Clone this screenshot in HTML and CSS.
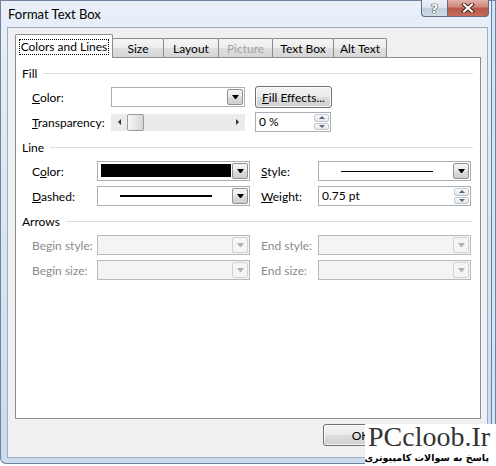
FILE: index.html
```html
<!DOCTYPE html>
<html lang="en">
<head>
  <meta charset="UTF-8" />
  <title>Format Text Box</title>
  <link rel="stylesheet" href="styles.css">
</head>
<body>

<div class="window">
  <div class="titlebar">
    <span class="title">Format Text Box</span>
    <div class="caption">
      <span class="cap-btn help">?</span>
      <span class="cap-btn close">
        <svg width="14" height="10" viewBox="0 0 14 10">
          <path d="M3 1.5 L11 8.5 M11 1.5 L3 8.5" stroke="#4a2620" stroke-width="4" stroke-linecap="square" fill="none"/>
          <path d="M3 1.5 L11 8.5 M11 1.5 L3 8.5" stroke="#fff" stroke-width="2" stroke-linecap="square" fill="none"/>
        </svg>
      </span>
    </div>
  </div>

  <div class="client">
    <div class="tabs">
      <div class="tab active"><span class="focus">Colors and Lines</span></div>
      <div class="tab w-size">Size</div>
      <div class="tab w-layout">Layout</div>
      <div class="tab w-picture off">Picture</div>
      <div class="tab w-textbox">Text Box</div>
      <div class="tab w-alt">Alt Text</div>
    </div>

    <div class="panel">
      <!-- Fill -->
      <div class="group">
        <div class="group-title">Fill</div>
        <div class="fields fields-fill">
          <span><u>C</u>olor:</span>
          <div class="combo">
            <div class="field"></div>
            <span class="drop"></span>
          </div>
          <button class="btn btn-effects"><u>F</u>ill Effects...</button>

          <span><u>T</u>ransparency:</span>
          <div class="scroll">
            <span class="sb-btn"><i class="arr-left"></i></span>
            <span class="thumb"></span>
            <span class="track"></span>
            <span class="sb-btn"><i class="arr-right"></i></span>
          </div>
          <div class="spin spin-pct">
            <span class="value">0 %</span>
            <span class="spin-btns"><i class="up"></i><i class="down"></i></span>
          </div>
        </div>
      </div>

      <!-- Line -->
      <div class="group">
        <div class="group-title">Line</div>
        <div class="fields fields-line">
          <span>C<u>o</u>lor:</span>
          <div class="combo">
            <div class="swatch"></div>
            <span class="drop"></span>
          </div>
          <span class="lbl2"><u>S</u>tyle:</span>
          <div class="combo">
            <div class="field"><span class="stroke thin"></span></div>
            <span class="drop"></span>
          </div>

          <span><u>D</u>ashed:</span>
          <div class="combo">
            <div class="field"><span class="stroke thick"></span></div>
            <span class="drop"></span>
          </div>
          <span class="lbl2"><u>W</u>eight:</span>
          <div class="spin">
            <span class="value">0.75 pt</span>
            <span class="spin-btns"><i class="up"></i><i class="down"></i></span>
          </div>
        </div>
      </div>

      <!-- Arrows -->
      <div class="group">
        <div class="group-title">Arrows</div>
        <div class="fields fields-line disabled">
          <span>Begin style:</span>
          <div class="combo"><div class="field"></div><span class="drop"></span></div>
          <span class="lbl2">End style:</span>
          <div class="combo"><div class="field"></div><span class="drop"></span></div>

          <span>Begin size:</span>
          <div class="combo"><div class="field"></div><span class="drop"></span></div>
          <span class="lbl2">End size:</span>
          <div class="combo"><div class="field"></div><span class="drop"></span></div>
        </div>
      </div>
    </div>

    <div class="actions">
      <button class="btn btn-dlg">OK</button>
      <button class="btn btn-dlg">Cancel</button>
    </div>
  </div>
</div>

<div class="watermark">
  <div class="wm-brand">PCcloob.Ir</div>
  <div class="wm-sub" dir="rtl">پاسخ به سوالات کامپیوتری</div>
</div>

</body>
</html>
```

FILE: styles.css
```css
body {
  margin: 0;
  background: #fff;
  font-family: Lato, "Liberation Sans", sans-serif;
  font-size: 12px;
  color: #000;
}

/* window frame */
.window {
  width: 496px;
  height: 464px;
  box-sizing: border-box;
  padding: 0 8px 6px 7px;
  display: flex;
  flex-direction: column;
  background: linear-gradient(180deg, #e8eff8 0%, #dbe6f2 45%, #cbdbed 100%);
  box-shadow: inset 0 0 0 1px #70859d, inset -4px 0 0 0 #d6e4f2, inset -5px 0 0 0 #4d86b8;
  border-radius: 0 0 6px 6px;
}

.titlebar {
  height: 27px;
  display: flex;
  justify-content: space-between;
}

.title {
  padding-left: 1px;
  line-height: 28px;
  font-size: 13px;
}

.caption {
  display: flex;
  margin-right: -1px;
  height: 17px;
}

.cap-btn {
  box-sizing: border-box;
  height: 17px;
  display: flex;
  align-items: center;
  justify-content: center;
  border: 1px solid #5d6f86;
  border-top: none;
}

.help {
  width: 26px;
  border-right: none;
  border-radius: 0 0 0 4px;
  background: linear-gradient(180deg, #eef2f7 0%, #dbe3ec 50%, #c3cfdc 51%, #cfdae6 100%);
  color: #fff;
  font-family: "DejaVu Sans", sans-serif;
  font-size: 13px;
  font-weight: bold;
  text-shadow: 0 0 1px #333, 0 0 1px #333, 0 0 1px #333;
}

.close {
  width: 42px;
  border-radius: 0 0 4px 0;
  background: linear-gradient(180deg, #e3b1a8 0%, #d08577 45%, #b8584a 50%, #c46a5b 100%);
}

/* client area */
.client {
  flex: 1;
  background: #f0f0f0;
  border: 1px solid #9cadc1;
  padding: 6px 6px 0 7px;
  display: flex;
  flex-direction: column;
}

.tabs {
  display: flex;
  align-items: flex-end;
  height: 23px;
}

.tab {
  box-sizing: border-box;
  height: 19px;
  margin-left: -1px;
  border: 1px solid #898c95;
  border-bottom: none;
  border-radius: 2px 2px 0 0;
  background: linear-gradient(180deg, #f5f5f5 0%, #ececec 50%, #e0e0e0 51%, #d6d6d6 100%);
  display: flex;
  align-items: center;
  justify-content: center;
  padding-top: 1px;
}

.tab.active {
  width: 98px;
  height: 24px;
  margin-left: 0;
  margin-bottom: -1px;
  background: #fff;
  position: relative;
  z-index: 1;
  align-items: flex-start;
  padding-top: 4px;
}

.focus {
  box-sizing: border-box;
  width: 90px;
  height: 16px;
  border: 1px dotted #000;
  text-align: center;
  line-height: 14px;
}

.w-size { width: 52px; }
.w-layout { width: 56px; }
.w-picture { width: 55px; }
.w-textbox { width: 62px; }
.w-alt { width: 54px; }

.tab.off {
  color: #a3a3a3;
}

.panel {
  height: 362px;
  box-sizing: border-box;
  border: 1px solid #898c95;
  background: #fff;
  padding-top: 8px;
}

.group + .group {
  margin-top: 8px;
}

.group-title {
  display: flex;
  align-items: center;
  height: 14px;
  padding-left: 6px;
  margin-right: 7px;
  margin-bottom: 7px;
}

.group-title::after {
  content: "";
  flex: 1;
  height: 1px;
  margin-left: 6px;
  background: #d5dfe5;
}

.fields {
  display: grid;
  grid-auto-rows: 20px;
  row-gap: 5px;
  align-items: center;
  padding-left: 16px;
}

.fields-fill {
  grid-template-columns: 79px 134px 87px;
}

.fields-line {
  grid-template-columns: 65px 153px 68px 153px;
}

.lbl2 {
  padding-left: 11px;
}

.disabled {
  color: #8b8b8b;
}

/* combo boxes */
.combo {
  box-sizing: border-box;
  height: 20px;
  padding: 1px;
  display: flex;
  border: 1px solid #a9afb7;
  background: #fff;
}

.combo .field {
  flex: 1;
  display: flex;
  align-items: center;
  justify-content: center;
}

.swatch {
  flex: 1;
  margin: 1px 1px 2px 2px;
  background: #000;
}

.stroke {
  width: 92px;
  background: #000;
}

.stroke.thin { height: 1px; }
.stroke.thick { height: 2px; }

.drop {
  box-sizing: border-box;
  width: 16px;
  border: 1px solid #8e9297;
  border-radius: 2px;
  background: linear-gradient(180deg, #f4f4f4 0%, #ebebeb 50%, #dcdcdc 51%, #cfcfcf 100%);
  display: flex;
  align-items: center;
  justify-content: center;
}

.drop::before {
  content: "";
  width: 1px;
  border-left: 3px solid transparent;
  border-right: 3px solid transparent;
  border-top: 4px solid #000;
}

.disabled .combo {
  border-color: #b7bbc0;
  background: #f4f4f4;
}

.disabled .drop {
  border-color: #d0d2d5;
  background: #f4f4f4;
}

.disabled .drop::before {
  border-top-color: #b1b1b1;
}

/* scroll bar */
.scroll {
  height: 17px;
  display: flex;
  background: #ebebeb;
}

.sb-btn {
  width: 16px;
  display: flex;
  align-items: center;
  justify-content: center;
}

.arr-left {
  border-top: 3px solid transparent;
  border-bottom: 3px solid transparent;
  border-right: 3px solid #333;
}

.arr-right {
  border-top: 3px solid transparent;
  border-bottom: 3px solid transparent;
  border-left: 3px solid #333;
}

.thumb {
  box-sizing: border-box;
  width: 17px;
  border: 1px solid #9a9a9a;
  border-radius: 2px;
  background: linear-gradient(90deg, #f6f6f6 0%, #e6e6e6 50%, #d6d6d6 100%);
}

.track {
  flex: 1;
}

/* spin boxes */
.spin {
  box-sizing: border-box;
  height: 20px;
  display: flex;
  align-items: stretch;
  border: 1px solid #a9afb7;
  background: #fff;
}

.spin-pct {
  width: 76px;
  margin-left: 10px;
}

.spin .value {
  flex: 1;
  padding-left: 3px;
  line-height: 18px;
}

.spin-btns {
  width: 15px;
  display: flex;
  flex-direction: column;
  padding: 1px 1px 1px 0;
  gap: 1px;
}

.spin-btns i {
  flex: 1;
  display: flex;
  align-items: center;
  justify-content: center;
  border: 1px solid #c3c8cf;
  border-radius: 2px;
  background: linear-gradient(180deg, #fafafa, #e4e7ea);
}

.spin-btns .up::before {
  content: "";
  border-left: 3px solid transparent;
  border-right: 3px solid transparent;
  border-bottom: 3px solid #59677d;
}

.spin-btns .down::before {
  content: "";
  border-left: 3px solid transparent;
  border-right: 3px solid transparent;
  border-top: 3px solid #59677d;
}

/* push buttons */
.btn {
  box-sizing: border-box;
  height: 22px;
  padding: 0;
  font: inherit;
  color: #000;
  border: 1px solid #707070;
  border-radius: 3px;
  background: linear-gradient(180deg, #f3f3f3 0%, #ebebeb 50%, #dddddd 51%, #cfcfcf 100%);
  box-shadow: inset 0 0 0 1px rgba(255, 255, 255, 0.8);
}

.btn-effects {
  width: 77px;
  margin-left: 10px;
}

.actions {
  display: flex;
  justify-content: flex-end;
  gap: 6px;
  margin-top: 5px;
  padding-right: 2px;
}

.btn-dlg {
  width: 75px;
}

/* site stamp in the corner */
.watermark {
  position: absolute;
  right: 0;
  bottom: 0;
  width: 131px;
  height: 42px;
  background: #fff;
}

.wm-brand {
  font-family: "Liberation Serif", serif;
  font-size: 28px;
  line-height: 26px;
  color: #333;
  padding-left: 3px;
}

.wm-sub {
  font-family: "DejaVu Sans", sans-serif;
  font-weight: bold;
  font-size: 9.5px;
  line-height: 15px;
  white-space: nowrap;
  padding-right: 7px;
}
```
